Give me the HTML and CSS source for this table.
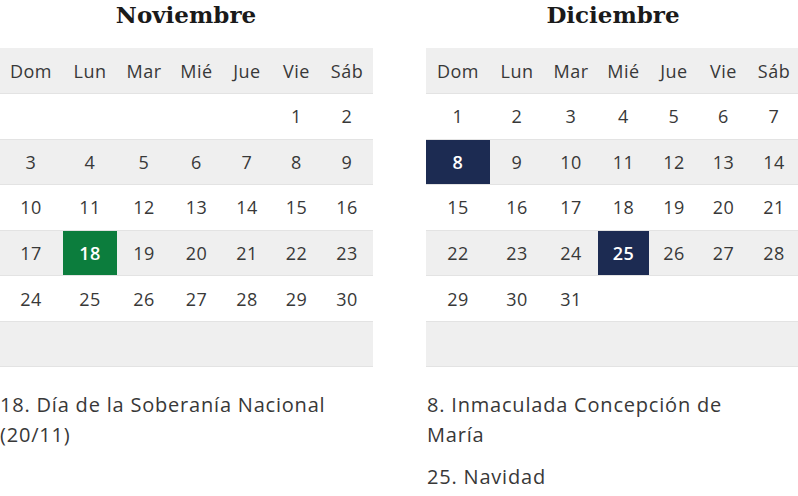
FILE: index.html
```html
<!DOCTYPE html>
<html lang="es">
<head>
<meta charset="utf-8">
<link rel="stylesheet" href="styles.css">
</head>
<body>
<div class="months">
  <section class="month">
    <h2 class="title">Noviembre</h2>
    <table class="cal">
      <colgroup><col class="c1"><col class="c2"><col class="c3"><col class="c4"><col class="c5"><col class="c6"><col class="c7"></colgroup>
      <thead><tr><th>Dom</th><th>Lun</th><th>Mar</th><th>Mié</th><th>Jue</th><th>Vie</th><th>Sáb</th></tr></thead>
      <tbody>
        <tr><td></td><td></td><td></td><td></td><td></td><td>1</td><td>2</td></tr>
        <tr><td>3</td><td>4</td><td>5</td><td>6</td><td>7</td><td>8</td><td>9</td></tr>
        <tr><td>10</td><td>11</td><td>12</td><td>13</td><td>14</td><td>15</td><td>16</td></tr>
        <tr><td>17</td><td class="hl green">18</td><td>19</td><td>20</td><td>21</td><td>22</td><td>23</td></tr>
        <tr><td>24</td><td>25</td><td>26</td><td>27</td><td>28</td><td>29</td><td>30</td></tr>
        <tr><td></td><td></td><td></td><td></td><td></td><td></td><td></td></tr>
      </tbody>
    </table>
    <div class="notes">
      <p>18. Día de la Soberanía Nacional (20/11)</p>
    </div>
  </section>
  <section class="month">
    <h2 class="title">Diciembre</h2>
    <table class="cal">
      <colgroup><col class="c1"><col class="c2"><col class="c3"><col class="c4"><col class="c5"><col class="c6"><col class="c7"></colgroup>
      <thead><tr><th>Dom</th><th>Lun</th><th>Mar</th><th>Mié</th><th>Jue</th><th>Vie</th><th>Sáb</th></tr></thead>
      <tbody>
        <tr><td>1</td><td>2</td><td>3</td><td>4</td><td>5</td><td>6</td><td>7</td></tr>
        <tr><td class="hl navy">8</td><td>9</td><td>10</td><td>11</td><td>12</td><td>13</td><td>14</td></tr>
        <tr><td>15</td><td>16</td><td>17</td><td>18</td><td>19</td><td>20</td><td>21</td></tr>
        <tr><td>22</td><td>23</td><td>24</td><td class="hl navy">25</td><td>26</td><td>27</td><td>28</td></tr>
        <tr><td>29</td><td>30</td><td>31</td><td></td><td></td><td></td><td></td></tr>
        <tr><td></td><td></td><td></td><td></td><td></td><td></td><td></td></tr>
      </tbody>
    </table>
    <div class="notes">
      <p>8. Inmaculada Concepción de María</p>
      <p>25. Navidad</p>
    </div>
  </section>
</div>
</body>
</html>
```
FILE: styles.css
```css
html, body {
  margin: 0;
  padding: 0;
  background: #fff;
  overflow: hidden;
}
.months {
  display: grid;
  grid-template-columns: 374px 374px;
  column-gap: 53px;
  margin-left: -1px;
  font-family: "Open Sans", "Noto Sans", sans-serif;
  color: #383838;
}
.title {
  margin: 0;
  height: 48px;
  padding-top: 1px;
  box-sizing: border-box;
  text-align: center;
  font-family: "DejaVu Serif", serif;
  font-weight: bold;
  font-size: 23px;
  line-height: 28px;
  color: #1a1a1a;
}
.cal {
  width: 374px;
  border-collapse: collapse;
  table-layout: fixed;
  font-size: 18px;
  letter-spacing: 0.5px;
}
.c1 { width: 64px; }
.c2 { width: 54px; }
.c3 { width: 54px; }
.c4 { width: 51px; }
.c5 { width: 50px; }
.c6 { width: 49px; }
.c7 { width: 52px; }
.cal tr {
  height: 45.57px;
}
.cal th, .cal td {
  padding: 0;
  text-align: center;
  font-weight: normal;
  border-bottom: 1px solid #e3e3e3;
}
.cal thead tr,
.cal tbody tr:nth-child(even) {
  background: #efefef;
}
.cal td.hl {
  color: #fff;
  font-weight: 600;
}
.cal td.green { background: #0c7d3d; }
.cal td.navy { background: #1c2b52; }
.notes {
  max-width: 345px;
  padding-top: 23px;
  font-size: 20px;
  line-height: 30px;
  letter-spacing: 0.8px;
  color: #383838;
}
.notes p {
  margin: 0 0 12px;
  padding-left: 1px;
}
```
